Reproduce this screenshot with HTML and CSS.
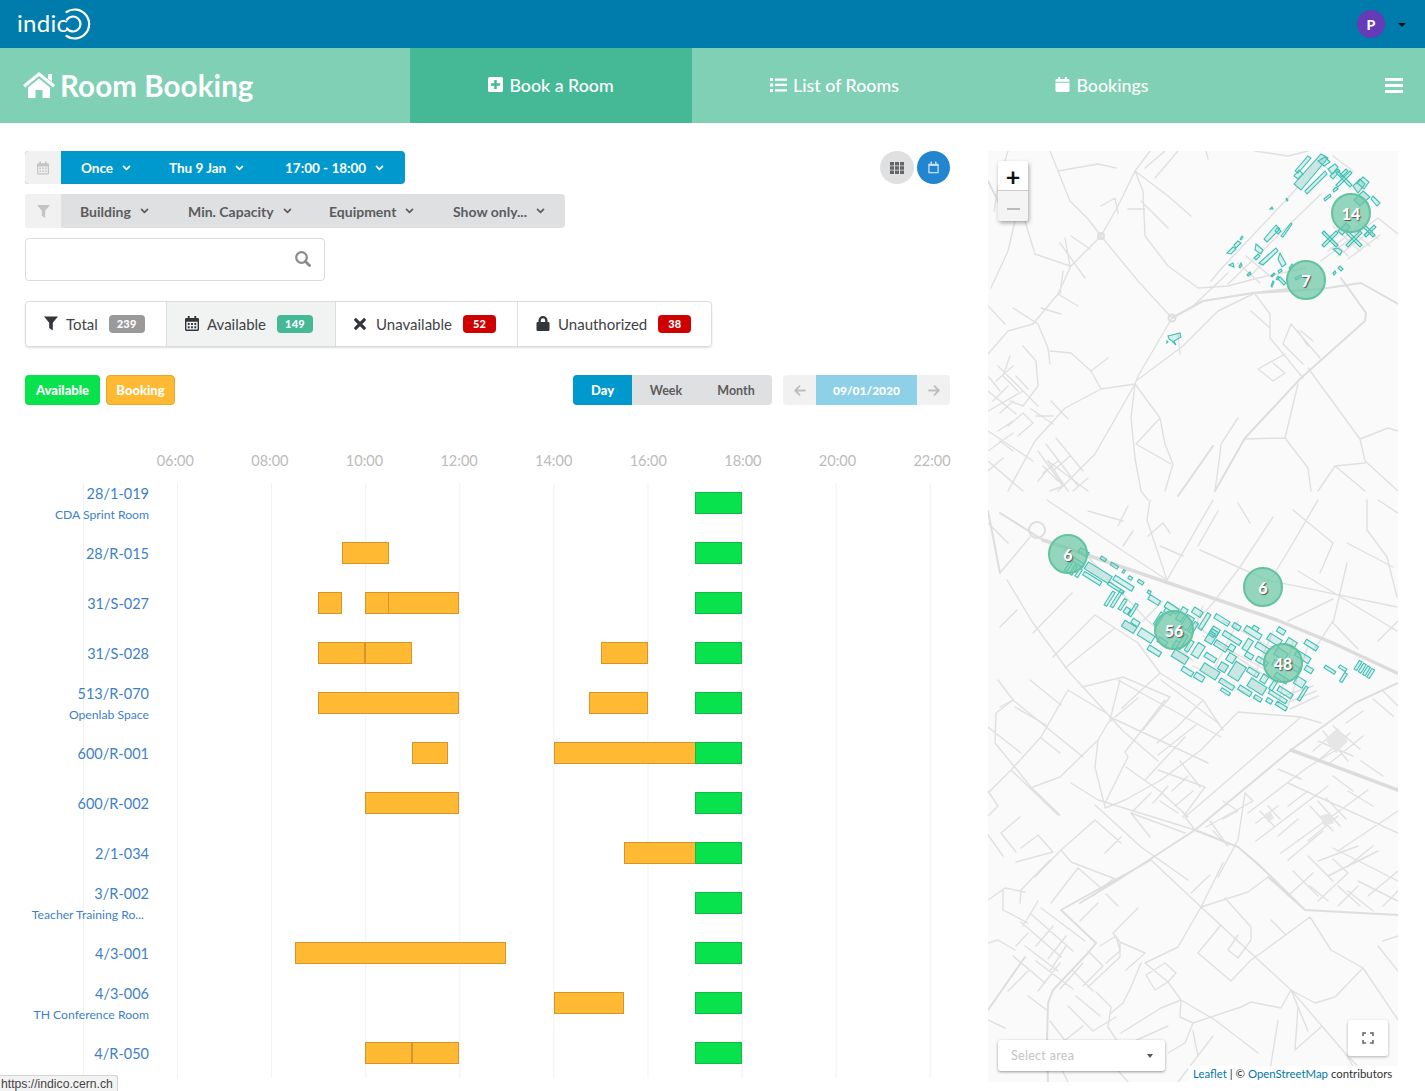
FILE: index.html
```html
<!DOCTYPE html>
<html lang="en">
<head>
    <meta charset="UTF-8">
    <meta name="viewport" content="width=device-width, initial-scale=1.0">
    <title>Room Booking</title>
    <link rel="stylesheet" href="styles.css">
</head>
<body>
    <svg class="icon-defs" aria-hidden="true">
        <symbol id="i-home" viewBox="0 0 32 26"><path d="M16 0 L32 13 L30 15.5 L16 4 L2 15.5 L0 13 Z M25 2h4v8l-4-3.5Z M16 6.5 L27 15.5 V25 a1 1 0 0 1-1 1 H19.500 V18 h-7 V26 H6 a1 1 0 0 1-1-1 V15.500 Z"/></symbol>
        <symbol id="i-plus" viewBox="0 0 16 16"><path fill-rule="evenodd" d="M2 0h12a2 2 0 0 1 2 2v12a2 2 0 0 1-2 2H2a2 2 0 0 1-2-2V2a2 2 0 0 1 2-2Zm4.700 3.200v3.500H3.200v2.600h3.500v3.500h2.600V9.300h3.500V6.700H9.300V3.200Z"/></symbol>
        <symbol id="i-list" viewBox="0 0 17 14"><path d="M0 0h3v3H0ZM5 .5h12v2.300H5ZM0 5.500h3v3H0ZM5 5.800h12v2.300H5ZM0 11h3v3H0ZM5 11.300h12v2.300H5Z"/></symbol>
        <symbol id="i-cal" viewBox="0 0 15 16"><path d="M3 0h2v2h5V0h2v2h1.500A1.500 1.500 0 0 1 15 3.500V5H0V3.500A1.500 1.500 0 0 1 1.500 2H3ZM0 6h15v8.500a1.500 1.500 0 0 1-1.500 1.500h-12A1.500 1.500 0 0 1 0 14.500Z"/></symbol>
        <symbol id="i-cal-grid" viewBox="0 0 15 16"><path fill-rule="evenodd" d="M3 0h2v2h5V0h2v2h1.500A1.500 1.500 0 0 1 15 3.500v11a1.500 1.500 0 0 1-1.500 1.500h-12A1.500 1.500 0 0 1 0 14.500v-11A1.500 1.500 0 0 1 1.500 2H3ZM1.500 6v8.500h12V6Zm1.500 1.500h2v2H3Zm3.500 0h2v2h-2Zm3.500 0h2v2h-2ZM3 11h2v2H3Zm3.500 0h2v2h-2Zm3.500 0h2v2h-2Z"/></symbol>
        <symbol id="i-filter" viewBox="0 0 14 14"><path d="M0 0h14L8.800 6.200V14L5.200 11.500V6.200Z"/></symbol>
        <symbol id="i-search" viewBox="0 0 16 16"><path fill="none" stroke="currentColor" stroke-width="2.200" d="M6.500 1.200a5.300 5.300 0 1 0 0 10.600a5.300 5.300 0 0 0 0-10.600Z"/><path fill="none" stroke="currentColor" stroke-width="2.800" stroke-linecap="round" d="M10.500 10.500 L14.500 14.500"/></symbol>
        <symbol id="i-times" viewBox="0 0 12 12"><path fill="none" stroke="currentColor" stroke-width="3.200" stroke-linecap="round" d="M1.800 1.800 L10.200 10.200 M10.200 1.800 L1.800 10.200"/></symbol>
        <symbol id="i-lock" viewBox="0 0 13 15"><path fill-rule="evenodd" d="M6.500 0A4.500 4.500 0 0 1 11 4.500V6h.8A1.200 1.200 0 0 1 13 7.200v6.600A1.200 1.200 0 0 1 11.800 15H1.200A1.200 1.200 0 0 1 0 13.800V7.200A1.200 1.200 0 0 1 1.200 6H2V4.500A4.500 4.500 0 0 1 6.500 0Zm0 2.300A2.200 2.200 0 0 0 4.300 4.500V6h4.400V4.500A2.200 2.200 0 0 0 6.500 2.300Z"/></symbol>
        <symbol id="i-grid" viewBox="0 0 14 12"><path d="M0 0h4v3.400H0ZM5 0h4v3.400H5ZM10 0h4v3.400h-4ZM0 4.300h4v3.400H0ZM5 4.300h4v3.400H5ZM10 4.300h4v3.400h-4ZM0 8.600h4V12H0ZM5 8.600h4V12H5ZM10 8.600h4V12h-4Z"/></symbol>
        <symbol id="i-cal-open" viewBox="0 0 12 13"><path fill="none" stroke="currentColor" stroke-width="1.400" d="M1 3h10v9H1Z"/><path fill="none" stroke="currentColor" stroke-width="1.600" d="M3.500 0v3M8.500 0v3M1 4h10"/></symbol>
        <symbol id="i-chev" viewBox="0 0 10 7"><path fill="none" stroke="currentColor" stroke-width="2" stroke-linecap="round" stroke-linejoin="round" d="M1.500 1.500 L5 5 L8.500 1.500"/></symbol>
        <symbol id="i-left" viewBox="0 0 12 11"><path fill="none" stroke="currentColor" stroke-width="1.800" stroke-linecap="round" stroke-linejoin="round" d="M11 5.500H1.500M5.500 1.200 L1.200 5.500 L5.500 9.800"/></symbol>
        <symbol id="i-right" viewBox="0 0 12 11"><path fill="none" stroke="currentColor" stroke-width="1.800" stroke-linecap="round" stroke-linejoin="round" d="M1 5.500h9.500M6.500 1.200 L10.800 5.500 L6.500 9.800"/></symbol>
    </svg>

    <header class="topbar">
        <a class="logo">
            <span class="logo-text">indic</span>
            <svg class="logo-mark" viewBox="0 0 36 32"><path d="M9.500 4 A14.500 14.500 0 1 1 9.500 28 M10 11.500 A7.500 7.500 0 1 1 10 20.500" fill="none" stroke="#fff" stroke-width="2.200" stroke-linecap="round"/></svg>
        </a>
        <div class="user">
            <span class="avatar">P</span>
            <span class="user-caret"></span>
        </div>
    </header>

    <nav class="navbar">
        <div class="brand">
            <svg class="brand-icon"><use href="#i-home"/></svg>
            <span>Room Booking</span>
        </div>
        <a class="tab tab-book active"><svg class="tab-icon"><use href="#i-plus"/></svg>Book a Room</a>
        <a class="tab tab-list"><svg class="tab-icon"><use href="#i-list"/></svg>List of Rooms</a>
        <a class="tab tab-bookings"><svg class="tab-icon"><use href="#i-cal"/></svg>Bookings</a>
        <div class="burger"><span></span><span></span><span></span></div>
    </nav>

    <main class="content">
        <section class="left">
            <div class="toolbar-top">
                <div class="filter-bar when">
                    <span class="filter-icon"><svg class="cal-mini"><use href="#i-cal-grid"/></svg></span>
                    <span class="filter-item once">Once <svg class="chev"><use href="#i-chev"/></svg></span>
                    <span class="filter-item date">Thu 9 Jan <svg class="chev"><use href="#i-chev"/></svg></span>
                    <span class="filter-item time">17:00 - 18:00 <svg class="chev"><use href="#i-chev"/></svg></span>
                </div>
                <div class="view-btns">
                    <span class="round-btn"><svg class="grid-icon"><use href="#i-grid"/></svg></span>
                    <span class="round-btn on"><svg class="open-icon"><use href="#i-cal-open"/></svg></span>
                </div>
            </div>

            <div class="filter-bar what">
                <span class="filter-icon"><svg class="filter-mini"><use href="#i-filter"/></svg></span>
                <span class="filter-item building">Building <svg class="chev"><use href="#i-chev"/></svg></span>
                <span class="filter-item capacity">Min. Capacity <svg class="chev"><use href="#i-chev"/></svg></span>
                <span class="filter-item equipment">Equipment <svg class="chev"><use href="#i-chev"/></svg></span>
                <span class="filter-item showonly">Show only... <svg class="chev"><use href="#i-chev"/></svg></span>
            </div>

            <div class="search-box"><svg class="search-icon"><use href="#i-search"/></svg></div>

            <div class="stats">
                <div class="stat stat-total"><svg class="stat-icon"><use href="#i-filter"/></svg>Total <span class="count grey">239</span></div>
                <div class="stat stat-avail current"><svg class="stat-icon"><use href="#i-cal-grid"/></svg>Available <span class="count green">149</span></div>
                <div class="stat stat-unavail"><svg class="stat-icon small"><use href="#i-times"/></svg>Unavailable <span class="count red">52</span></div>
                <div class="stat stat-unauth"><svg class="stat-icon"><use href="#i-lock"/></svg>Unauthorized <span class="count red">38</span></div>
            </div>

            <div class="controls">
                <div class="legend">
                    <span class="tag tag-free">Available</span>
                    <span class="tag tag-booked">Booking</span>
                </div>
                <div class="modes">
                    <span class="mode mode-day on">Day</span>
                    <span class="mode mode-week">Week</span>
                    <span class="mode mode-month">Month</span>
                </div>
                <div class="date-nav">
                    <span class="date-arrow"><svg class="arrow"><use href="#i-left"/></svg></span>
                    <span class="date-value">09/01/2020</span>
                    <span class="date-arrow"><svg class="arrow"><use href="#i-right"/></svg></span>
                </div>
            </div>

            <div class="hours">
                <span>06:00</span><span>08:00</span><span>10:00</span><span>12:00</span><span>14:00</span><span>16:00</span><span>18:00</span><span>20:00</span><span>22:00</span>
            </div>

            <div class="rows">
                <div class="row">
                    <a class="room"><span class="room-name">28/1-019</span><span class="room-sub">CDA Sprint Room</span></a>
                    <div class="track"><i class="bar free" style="left:518px;width:47px"></i></div>
                </div>
                <div class="row">
                    <a class="room"><span class="room-name">28/R-015</span></a>
                    <div class="track">
                        <i class="bar busy" style="left:165px;width:47px"></i>
                        <i class="bar free" style="left:518px;width:47px"></i>
                    </div>
                </div>
                <div class="row">
                    <a class="room"><span class="room-name">31/S-027</span></a>
                    <div class="track">
                        <i class="bar busy" style="left:141px;width:24px"></i>
                        <i class="bar busy" style="left:188px;width:24px"></i>
                        <i class="bar busy" style="left:211px;width:71px"></i>
                        <i class="bar free" style="left:518px;width:47px"></i>
                    </div>
                </div>
                <div class="row">
                    <a class="room"><span class="room-name">31/S-028</span></a>
                    <div class="track">
                        <i class="bar busy" style="left:141px;width:47px"></i>
                        <i class="bar busy" style="left:188px;width:47px"></i>
                        <i class="bar busy" style="left:424px;width:47px"></i>
                        <i class="bar free" style="left:518px;width:47px"></i>
                    </div>
                </div>
                <div class="row">
                    <a class="room"><span class="room-name">513/R-070</span><span class="room-sub">Openlab Space</span></a>
                    <div class="track">
                        <i class="bar busy" style="left:141px;width:141px"></i>
                        <i class="bar busy" style="left:412px;width:59px"></i>
                        <i class="bar free" style="left:518px;width:47px"></i>
                    </div>
                </div>
                <div class="row">
                    <a class="room"><span class="room-name">600/R-001</span></a>
                    <div class="track">
                        <i class="bar busy" style="left:235px;width:36px"></i>
                        <i class="bar busy" style="left:377px;width:142px"></i>
                        <i class="bar free" style="left:518px;width:47px"></i>
                    </div>
                </div>
                <div class="row">
                    <a class="room"><span class="room-name">600/R-002</span></a>
                    <div class="track">
                        <i class="bar busy" style="left:188px;width:94px"></i>
                        <i class="bar free" style="left:518px;width:47px"></i>
                    </div>
                </div>
                <div class="row">
                    <a class="room"><span class="room-name">2/1-034</span></a>
                    <div class="track">
                        <i class="bar busy" style="left:447px;width:72px"></i>
                        <i class="bar free" style="left:518px;width:47px"></i>
                    </div>
                </div>
                <div class="row">
                    <a class="room"><span class="room-name">3/R-002</span><span class="room-sub cut">Teacher Training Ro...</span></a>
                    <div class="track"><i class="bar free" style="left:518px;width:47px"></i></div>
                </div>
                <div class="row">
                    <a class="room"><span class="room-name">4/3-001</span></a>
                    <div class="track">
                        <i class="bar busy" style="left:118px;width:211px"></i>
                        <i class="bar free" style="left:518px;width:47px"></i>
                    </div>
                </div>
                <div class="row">
                    <a class="room"><span class="room-name">4/3-006</span><span class="room-sub">TH Conference Room</span></a>
                    <div class="track">
                        <i class="bar busy" style="left:377px;width:70px"></i>
                        <i class="bar free" style="left:518px;width:47px"></i>
                    </div>
                </div>
                <div class="row">
                    <a class="room"><span class="room-name">4/R-050</span></a>
                    <div class="track">
                        <i class="bar busy" style="left:188px;width:47px"></i>
                        <i class="bar busy" style="left:235px;width:47px"></i>
                        <i class="bar free" style="left:518px;width:47px"></i>
                    </div>
                </div>
            </div>
        </section>

        <section class="map">
            <svg class="map-bg" viewBox="0 0 410 931">
                <g class="roads thin">
                    <!-- north -->
                    <path d="M62 0 L70 20 L82 50 L100 68 L113 85 M70 20 L110 13 L128 17 M20 0 L12 25 L6 60 M113 85 L130 55 L147 20 L162 0 M147 20 L180 45 L203 65 M153 50 L180 77 M157 17 L177 0 M167 27 L190 0 M147 20 L155 40 L157 85 L180 115 L210 137 L240 135 L270 127 L317 117 M140 58 L157 58 M113 85 L150 130 L184 167 M37 70 L47 103 L82 115 M27 70 L20 100 L3 137 M83 85 L102 98 M72 92 L97 127 M77 87 L82 115 M113 55 L127 47 L130 62 M218 0 L220 8 M267 0 L300 5 L320 0"/>
                    <path d="M0 203 L20 180 L45 173 L70 143 L83 115 L113 85 M50 173 L60 197 L62 213 M62 200 L83 202 L103 220 L113 238 L147 233 M103 220 L120 207 M113 238 L77 257 L47 290 L20 340 M147 233 L107 303 L70 340 M147 233 L172 267 L148 293 L183 313 M172 267 L177 293 L185 313 L177 340 M147 233 L143 267 L147 307 L153 340 L160 349 M53 157 L73 163 M25 157 L50 173 M0 155 L17 173 M70 143 L90 155 M75 120 L72 143 M63 250 L80 268 M65 273 L43 258 M60 310 L100 340"/>
                    <path d="M184 167 L215 150 L265 142 M184 167 L150 225 L147 233 M148 230 L195 195 L230 160 L265 143 M223 130 L233 118 L300 47 L333 10 M240 133 L333 43 M333 110 L390 67 L410 83 M184 167 L205 155 L240 122 M190 183 L192 203 M257 288 L297 287 L320 317 L323 340 M297 287 L310 233 M320 217 L372 288 L377 310 L410 340 M372 288 L400 277 L410 280 M377 312 L347 315 L330 340 M347 315 L377 340 M232 303 L233 293 L250 267 M232 303 L227 340 M267 143 L282 163 L282 187 L315 227 M263 160 L282 177 M295 193 L303 173 L332 207 M295 193 L315 213 M270 218 L297 203 M270 218 L285 230 L297 222 L285 212 M310 180 L320 195 M325 190 L313 180"/>
                    <!-- left town, upper -->
                    <path d="M0 260 L35 240 M0 240 L28 263 M0 280 L45 310 M10 215 L50 255 M22 205 L15 225 L30 240 M35 195 L48 210 L50 235 L35 255 L22 250 M48 265 L65 265 M20 275 L35 262 L45 272 L30 285 M50 300 L75 335 L62 340 M58 293 L90 335 M68 287 L95 320 M80 340 L60 310 M70 310 L55 322 M82 305 L65 320 M0 300 L25 282 M0 320 L15 307 M35 340 L0 310 M100 327 L85 340 M8 230 L25 215 M5 250 L20 235 M0 225 L12 240 M12 262 L25 250 M28 225 L40 238 M12 290 L25 300 M25 270 L10 280 M55 315 L70 330 M50 330 L60 318"/>
                    <!-- middle band -->
                    <path d="M59 349 L120 390 L179 429 M179 429 L159 369 L162 349 M225 349 L179 429 M12 422 L42 386 M19 429 L45 472 L82 522 L95 536 L135 580 L170 610 M12 476 L29 459 M45 482 L84 442 M65 506 L107 464 M107 464 L150 492 L172 522 L215 549 L235 579 M77 517 L127 477 M94 536 L135 526 L182 546 M132 529 L122 569 M172 522 L134 557 M182 546 L155 579 M215 549 L189 576 L169 592 M12 556 L25 549 L95 606 M212 399 L279 429 L409 456 M285 366 L252 416 L225 452 L212 466 M305 359 L345 392 L332 422 M359 392 L405 416 M379 349 L379 379 L399 406 L409 446 M359 412 L345 472 M330 349 L305 392 L285 425 M0 372 L20 392 M390 349 L410 362 M230 360 L210 395 M250 352 L262 372 M100 360 L135 370 M145 380 L135 395 M310 420 L409 480 M345 472 L370 498 M390 490 L410 470 M300 470 L345 448 M160 385 L175 372 L182 382 M172 395 L195 405 M140 355 L130 375"/>
                    <!-- fields south of campus -->
                    <path d="M10 529 L25 549 L8 562 L7 592 L43 636 L72 664 M42 529 L73 554 M27 556 L58 574 M118 562 L80 539 L53 586 L23 619 L0 642 M53 587 L72 602 M130 529 L233 586 M173 529 L230 572 M150 547 L120 572 L110 589 L72 626 L45 636 M177 549 L137 601 L140 606 L117 652 M122 566 L220 612 M208 574 L170 604 M110 589 L107 616 L117 656 M138 616 L173 641 L200 666 M170 619 L217 636 L195 666 M157 629 L197 586 M163 642 L143 662 L162 686 M143 662 L197 682 M83 632 L110 649 L207 679 M107 654 L153 696 L200 729 M0 576 L33 602 M23 619 L70 664 M13 682 L32 666 M13 682 L28 701 M33 697 L50 684 L65 701 L28 711 M47 726 L73 699 L83 711 L130 729 M73 699 L107 669 L133 692 M117 702 L133 686 M0 640 L10 655 L0 665 M172 650 L190 662 M180 635 L165 652 M184 640 L200 625 M187 655 L205 640 M192 610 L212 636 M0 684 L15 705"/>
                    <path d="M313 566 L197 666 L207 679 M250 561 L213 599 L173 629 L137 649 L117 657 M250 561 L313 566 L333 572"/>
                    <!-- south east grid -->
                    <path d="M207 679 L250 696 L287 729 M257 642 L250 689 L230 726 M257 642 L265 650 L218 676 M260 662 L320 616 L353 596 M300 632 L410 682 M293 702 L380 639 M290 618 L313 628 M268 690 L340 635 M320 690 L350 665 M350 700 L410 660 M345 697 L410 730 M330 710 L370 695 M340 725 L390 700 M370 730 L410 750 M235 668 L250 660 L235 650 M225 680 L240 695 L222 670 M300 655 L320 640 M310 668 L290 685 M360 640 L385 655 M373 610 L395 625 M345 625 L365 640 M330 590 L365 605 M335 580 L360 610 M345 575 L372 598 M325 600 L350 578 M332 608 L362 582 M342 612 L375 585 M358 572 L375 560 M385 548 L405 565 M395 540 L410 555 M322 655 L345 680 M330 650 L352 675 M338 647 L358 668 M272 660 L286 675 M280 655 L292 668 M268 672 L290 655"/>
                    <!-- south -->
                    <path d="M163 709 L213 756 L303 839 L357 902 L375 931 M213 756 L260 741 L280 726 M213 756 L190 796 L157 812 M203 742 L222 724 M213 756 L235 712 M322 766 L343 799 L375 817 L410 869 M375 817 L347 846 L327 852 L303 839 M233 774 L210 802 L243 830 L263 809 L277 799 L322 766 M237 747 L263 776 L263 789 L250 807 L240 799 L250 784 M180 831 L193 849 L227 869 L270 902 M193 849 L173 857 L133 882 M193 849 L192 866 L205 872 L253 856 L263 851 L293 857 L303 839 L310 856 L307 899 M205 872 L197 892 L180 902 M157 812 L180 831 L167 839 L158 824 L177 812 L188 822 L180 831 M283 769 L297 783 M303 839 L320 880 M307 899 L333 876 M357 902 L385 931 M410 820 L390 795 M395 790 L410 785 M300 709 L335 680 M290 870 L280 931 M225 885 L190 931 M205 880 L210 905"/>
                    <!-- south west town -->
                    <path d="M0 749 L17 737 L37 741 M15 739 L15 759 L40 772 M0 792 L10 789 L27 799 M63 752 L90 717 M90 717 L113 737 M62 709 L33 739 L32 752 M0 869 L17 877 M33 771 L73 806 M43 763 L85 800 M53 757 L97 790 M65 775 L48 795 M78 785 L60 808 M50 750 L35 775 M40 782 L28 795 M37 795 L70 820 M48 810 L85 838 M25 805 L57 832 M62 820 L78 795 M50 840 L72 812 M72 838 L95 812 M40 845 L60 860 M85 820 L105 840 M88 845 L112 865 M80 855 L105 880 M62 870 L85 900 M70 895 L95 875 M100 800 L115 815 L95 835 M112 795 L128 785 L132 800 L118 812 M132 791 L125 782 L150 757 M132 791 L157 802 M108 841 L123 856 L120 876 L133 896 M132 792 L132 806 L100 836 M157 802 L138 819 M153 812 L143 836 L135 852 L123 862 M92 770 L110 752 M105 745 L125 728 M118 743 L130 755 M20 840 L40 820 M105 880 L128 866 M133 896 L180 875 M59 889 L80 931 M110 896 L140 931"/>
                    <path d="M300 745 L325 722 M320 705 L345 730 M345 708 L360 722 L330 750 M360 715 L385 695 M370 735 L350 755 M380 745 L410 720 M385 760 L360 740 M395 755 L410 740 M305 720 L330 745 M322 735 L340 750 M350 735 L372 755"/>
                    <!-- roads inside the campus -->
                    <path d="M100 406 L160 470 L205 510 M180 450 L240 500 L300 540 M215 455 L195 510 M250 470 L225 520 M285 480 L260 540 M305 490 L290 555 M320 495 L300 555 M235 470 L290 500 M215 485 L280 520 M205 515 L270 548 M295 545 L325 535 M298 552 L328 540 M302 558 L330 545 M155 470 L175 450 M345 470 L325 500"/>
                    <!-- around the north site -->
                    <path d="M335 80 L360 105 M345 75 L372 100 M355 72 L382 95 M365 68 L390 88 M340 100 L375 72 M350 105 L385 78 M360 108 L392 84 M337 15 L350 28 M345 5 L365 20 M250 112 L272 132 M258 105 L282 125 M262 125 L275 112"/>
                </g>
                <g class="roads mid">
                    <path d="M227 340 L257 287 L313 227 L377 170 L378 162 L353 127 M12 362 L55 389 M163 709 L73 759 L108 792 L100 802 L65 839 L60 852 L59 889 L60 931 M37 806 L0 859 M280 726 L317 759 L410 764 M207 679 L250 696 L270 713 L317 759 M270 142 L333 138 L373 132 L410 153 M184 167 L215 150 L265 142 L300 138 M0 30 L15 60 M0 360 L12 422 M190 345 L225 295 M410 532 L367 552 L303 599 L207 679 L130 729 L92 752"/>
                    <circle cx="49" cy="379" r="8" fill="none"/>
                    <circle cx="184" cy="167" r="3.500" fill="none"/>
                    <circle cx="113" cy="85" r="3" fill="none"/>
                </g>
                <g class="roads thick">
                    <path d="M55 389 L172 429 L289 469 L345 492 L409 522 M303 599 L410 639"/>
                </g>
                <path class="block" d="M338 590 L350 578 L360 590 L348 602 Z M332 665 L342 662 L346 672 L336 675 Z M276 664 L282 660 L286 667 L280 671 Z"/>

                <!-- buildings north -->
                <g class="buildings">
                    <path class="solid" d="M306 33 L333 3 L340 7 L313 39 Z M365 35 L372 28 L377 33 L370 42 Z M375 40 L382 46 L372 55 L366 49 Z M350 80 L358 72 L362 76 L354 84 Z"/>
                    <path d="M307 20 L320 5 L323 7 L310 22 Z M311 19 L306 25 L310 28 L315 23 Z M317 40 L337 20 L339 23 L319 43 Z M340 18 L347 13 L350 16 L344 23 Z M352 24 L358 18 L360 20 L354 26 Z M336 48 L342 43 L343 45 L337 50 Z M345 39 L348 36 L350 38 L346 41 Z M276 88 L288 74 L292 78 L279 91 Z M289 77 L293 80 L290 83 L287 80 Z M293 85 L303 72 L304 73 L295 86 Z M239 102 L245 96 L248 98 L243 103 Z M246 94 L250 90 L253 92 L248 97 Z M252 88 L254 85 L255 86 L253 89 Z M268 93 L275 99 L273 103 L267 99 Z M271 112 L288 97 L290 100 L275 114 Z M266 107 L270 103 L272 105 L268 109 Z M241 114 L245 112 L246 116 Z M290 108 L292 102 L298 113 L294 116 Z M369 32 L375 26 L381 31 L376 38 Z M385 45 L392 52 L389 55 L383 48 Z M330 10 L337 6 L342 11 L336 15 Z M342 25 L350 18 L352 20 L345 28 Z M345 122 L347 120 L348 122 L346 124 Z M283 125 L286 122 L287 123 L284 126 Z M288 128 L290 125 L291 126 L289 129 Z M290 120 L293 118 L294 120 L291 122 Z M259 124 L262 121 L263 123 L260 125 Z M251 116 L253 112 L254 114 L252 117 Z M301 117 L304 113 L305 115 L302 118 Z M307 127 L313 124 L314 126 L308 129 Z M283 135 L285 130 L286 131 L284 136 Z M298 47 L300 49 L299 50 Z M282 58 L284 56 L285 58 Z M180 185 L192 182 L193 186 L186 190 L188 194 L184 190 L181 188 Z M179 190 L180 191 L179 192 Z M292 126 L298 132 L296 134 L290 128 Z M352 115 L355 118 L353 120 L350 117 Z"/>
                    <path d="M348 34 L362 20 L364 22 L350 36 Z M350 20 L364 34 L362 36 L348 22 Z M334 94 L348 80 L350 82 L336 96 Z M336 80 L350 94 L348 96 L334 82 Z M358 94 L372 80 L374 82 L360 96 Z M360 80 L374 94 L372 96 L358 82 Z M376 84 L386 74 L388 76 L378 86 Z M377 74 L387 84 L385 86 L375 76 Z M345 98 L352 104 L354 100 L350 97 Z"/>
                </g>
                <!-- buildings campus, along the axis of the site -->
                <g class="buildings" transform="translate(75 395) rotate(32)">
                    <path class="solid" d="M30 0h28v8H30Z M182 24h18v9h-18Z M208 6h12v16h-12Z M230 12h18v9h-18Z M170 5h8v-14h-8Z M196 14h8v8h-8Z M92 30h14v7H92Z M150 28h16v8h-16Z"/>
                    <path d="M16 -8h10v5H16Z M38 -12h6v3h-6Z M50 -12h8v3h-8Z M64 -12h2v3h-2Z M72 -10h4v3h-4Z M82 -12h6v3h-6Z M96 -8h3v3h-3Z M14 4h14v4H14Z M14 10h3v10h-3Z M20 10h3v10h-3Z M26 10h3v9h-3Z M32 10h20v4H32Z M60 -3h22v5H60Z M58 6h18v3H58Z M72 6h3v20h-3Z M66 12h3v16h-3Z M80 12h3v12h-3Z M86 18h5v6h-5Z M92 10h3v14h-3Z M100 -5h12v5h-12Z M118 -8h14v6h-14Z M118 4h4v14h-4Z M110 28h16v8h-16Z M130 26h10v5h-10Z M126 38h14v5h-14Z M98 24h8v5h-8Z M134 -12h6v14h-6Z M144 -18h10v6h-10Z M142 -8h8v14h-8Z M152 -6h4v12h-4Z M158 -20h4v18h-4Z M166 -24h16v5h-16Z M186 -26h8v5h-8Z M198 -30h18v6h-18Z M222 -36h14v7h-14Z M240 -42h10v7h-10Z M256 -50h14v5h-14Z M170 -12h8v8h-8Z M182 -14h20v5h-20Z M206 -20h6v12h-6Z M216 -22h14v6h-14Z M236 -28h12v8h-12Z M254 -36h16v6h-16Z M150 10h4v16h-4Z M158 12h4v12h-4Z M166 10h8v14h-8Z M178 14h12v5h-12Z M180 -2h14v6h-14Z M198 2h8v8h-8Z M146 20h4v8h-4Z M194 -6h6v6h-6Z M222 4h12v5h-12Z M238 2h6v8h-6Z M248 -6h14v5h-14Z M268 -14h10v8h-10Z M250 2h4v10h-4Z M258 4h16v5h-16Z M252 12h20v4h-20Z M254 20h6v4h-6Z M264 18h12v4h-12Z M280 -10h3v16h-3Z M286 -38h12v3h-12Z M298 -46h8v3h-8Z M306 -42h3v10h-3Z M312 -60h3v10h-3Z M317 -60h3v10h-3Z M322 -60h3v10h-3Z M327 -60h3v10h-3Z M166 38h12v5h-12Z M180 36h10v6h-10Z M204 28h16v5h-16Z M224 24h14v5h-14Z M242 24h8v4h-8Z M170 -6h6v4h-6Z M212 -8h8v5h-8Z M224 -10h12v5h-12Z M240 -16h8v6h-8Z M254 -22h12v5h-12Z M270 -28h8v5h-8Z M204 -34h6v4h-6Z M226 -46h8v5h-8Z M210 36h10v3h-10Z M120 -2h8v4h-8Z"/>
                </g>
            </svg>

            <span class="cluster c14">14</span>
            <span class="cluster c7">7</span>
            <span class="cluster c6a">6</span>
            <span class="cluster c6b">6</span>
            <span class="cluster c56">56</span>
            <span class="cluster c48">48</span>

            <div class="zoom-ctl">
                <span class="zoom-in">+</span>
                <span class="zoom-out"></span>
            </div>

            <div class="fullscreen">
                <svg class="fs-icon" viewBox="0 0 12 12"><path fill="none" stroke="currentColor" stroke-width="1.600" d="M1 4V1h3M8 1h3v3M11 8v3H8M4 11H1V8"/></svg>
            </div>

            <div class="area-select">
                <span>Select area</span>
                <span class="area-caret"></span>
            </div>

            <div class="attribution"><a>Leaflet</a> | © <a>OpenStreetMap</a> contributors</div>
        </section>
    </main>

    <div class="status-tip">https://indico.cern.ch</div>
</body>
</html>
```

FILE: styles.css
```css
* {
    box-sizing: border-box;
}

html, body {
    height: 100%;
}

body {
    margin: 0;
    height: 1091px;
    overflow: hidden;
    position: relative;
    background: #fff;
    color: #333;
    font-family: Lato, "Open Sans", sans-serif;
}

.icon-defs {
    width: 0;
    height: 0;
    position: absolute;
}

svg {
    fill: currentColor;
}

/* top bars */
.topbar {
    height: 48px;
    background: #007cac;
    display: flex;
    justify-content: space-between;
    align-items: center;
    padding: 0 19px 0 17px;
}

.logo {
    display: flex;
    align-items: center;
    color: #fff;
}

.logo-text {
    font-size: 24px;
    font-weight: 400;
    line-height: 30px;
    letter-spacing: 0.3px;
    margin-top: -3px;
}

.logo-mark {
    width: 36px;
    height: 32px;
    margin-left: -11px;
    margin-top: -1px;
}

.user {
    display: flex;
    align-items: center;
    gap: 13px;
}

.avatar {
    width: 28px;
    height: 28px;
    border-radius: 50%;
    background: #673ab7;
    color: #fff;
    font-size: 14px;
    font-weight: 900;
    display: flex;
    align-items: center;
    justify-content: center;
}

.user-caret {
    border: 4px solid transparent;
    border-top: 4px solid #111;
    border-bottom: 0;
    margin-top: 2px;
}

.navbar {
    height: 75px;
    background: #7fd0b4;
    display: flex;
    align-items: center;
    color: #fff;
}

.brand {
    width: 410px;
    padding-left: 23px;
    display: flex;
    align-items: center;
    gap: 5px;
    font-size: 29.500px;
    font-weight: 700;
    letter-spacing: 0.1px;
}

.brand-icon {
    width: 32px;
    height: 26px;
    margin-top: -2px;
}

.tab {
    height: 75px;
    display: flex;
    align-items: center;
    justify-content: center;
    gap: 6px;
    font-size: 17.800px;
    font-weight: 500;
    padding-bottom: 2px;
}

.tab-book {
    width: 282px;
}

.tab-list {
    width: 285px;
}

.tab-bookings {
    width: 250px;
}

.tab.active {
    background: #45b995;
}

.tab-icon {
    width: 15px;
    height: 15px;
}

.tab-list .tab-icon {
    width: 17px;
    height: 14px;
}

.burger {
    margin-left: auto;
    margin-right: 22px;
    width: 18px;
    display: flex;
    flex-direction: column;
    gap: 3px;
}

.burger span {
    height: 3px;
    background: #fff;
}

/* layout */
.content {
    display: flex;
    gap: 38px;
    padding: 28px 0 0 25px;
}

.left {
    width: 925px;
    flex-shrink: 0;
}

/* filter bars */
.toolbar-top {
    display: flex;
    justify-content: space-between;
    align-items: flex-start;
}

.filter-bar {
    display: flex;
    align-items: center;
    font-size: 14px;
    font-weight: 700;
    border-radius: 4px;
    overflow: hidden;
}

.filter-icon {
    width: 36px;
    align-self: stretch;
    background: #f1f1f2;
    color: #c4c4c4;
    display: flex;
    align-items: center;
    justify-content: center;
}

.cal-mini {
    width: 12px;
    height: 14px;
}

.filter-mini {
    width: 13px;
    height: 13px;
}

.filter-item {
    height: 100%;
    display: flex;
    align-items: center;
    gap: 9px;
    white-space: nowrap;
}

.when {
    height: 33px;
    width: 380px;
    background: #0099ce;
    color: #fff;
    font-size: 13.500px;
}

.once {
    width: 88px;
    padding-left: 20px;
}

.date {
    width: 117px;
    padding-left: 20px;
}

.time {
    padding-left: 19px;
}

.chev {
    width: 9px;
    height: 6px;
}

.what {
    height: 34px;
    width: 540px;
    margin-top: 10px;
    background: #dfe0e2;
    color: #5c5c5c;
}

.building {
    width: 108px;
    padding-left: 19px;
}

.capacity {
    width: 141px;
    padding-left: 19px;
}

.equipment {
    width: 124px;
    padding-left: 19px;
}

.showonly {
    padding-left: 19px;
}

.view-btns {
    display: flex;
    gap: 3px;
}

.round-btn {
    width: 34px;
    height: 33px;
    border-radius: 50%;
    background: #dfe0e2;
    color: #666;
    display: flex;
    align-items: center;
    justify-content: center;
}

.round-btn.on {
    width: 33px;
    background: #2185d0;
    color: #c8e0f4;
}

.grid-icon {
    width: 14px;
    height: 12px;
}

.open-icon {
    width: 11px;
    height: 13px;
}

.search-box {
    width: 300px;
    height: 43px;
    margin-top: 10px;
    border: 1px solid #dcdcdc;
    border-radius: 4px;
    display: flex;
    align-items: center;
    justify-content: flex-end;
    padding: 0 13px 2px 0;
    color: #8a8a8a;
}

.search-icon {
    width: 16px;
    height: 16px;
}

/* stats */
.stats {
    display: flex;
    width: 687px;
    height: 46px;
    margin-top: 20px;
    border: 1px solid #dcdcdc;
    border-radius: 4px;
    box-shadow: 0 1px 2px rgba(34, 36, 38, 0.15);
    font-size: 15px;
    color: #3f4347;
}

.stat {
    display: flex;
    align-items: center;
    padding: 0 0 1px 18px;
    border-right: 1px solid #dedede;
}

.stat-total {
    width: 141px;
}

.stat-avail {
    width: 169px;
}

.stat-unavail {
    width: 182px;
}

.stat-unauth {
    flex: 1;
    border-right: 0;
}

.stat.current {
    background: #f1f2f2;
}

.stat-icon {
    width: 14px;
    height: 15px;
    margin-right: 8px;
    color: #33373b;
}

.stat-icon.small {
    width: 12px;
    height: 12px;
    margin-right: 10px;
}

.count {
    margin-left: 11px;
    height: 18px;
    padding: 0 8px;
    border-radius: 4px;
    color: #fff;
    font-size: 11px;
    font-weight: 900;
    line-height: 18px;
    letter-spacing: 0.2px;
}

.count.grey {
    background: #9a9a9a;
}

.count.green {
    background: #45b995;
}

.count.red {
    background: #cf0000;
    padding: 0 10px;
}

/* legend and date controls */
.controls {
    display: flex;
    align-items: flex-start;
    height: 30px;
    margin-top: 28px;
}

.legend {
    display: flex;
    gap: 6px;
    width: 548px;
}

.tag {
    height: 30px;
    border-radius: 4px;
    color: #fff;
    font-size: 13px;
    font-weight: 900;
    display: flex;
    align-items: center;
    justify-content: center;
}

.tag-free {
    width: 75px;
    background: #08e34d;
}

.tag-booked {
    width: 69px;
    background: #ffb932;
    border: 1px solid #eaa52b;
}

.modes {
    display: flex;
    width: 199px;
    height: 30px;
    background: #dfe0e2;
    border-radius: 4px;
    overflow: hidden;
    color: #5c5c5c;
    font-size: 12.500px;
    font-weight: 700;
}

.mode {
    display: flex;
    align-items: center;
    justify-content: center;
}

.mode-day {
    width: 59px;
}

.mode-week {
    width: 68px;
}

.mode-month {
    width: 72px;
}

.mode.on {
    background: #0099ce;
    color: #fff;
    font-size: 13px;
    font-weight: 900;
}

.date-nav {
    display: flex;
    margin-left: 11px;
    width: 167px;
    height: 30px;
    background: #f1f1f2;
    border-radius: 4px;
    overflow: hidden;
    color: #bdbdbd;
}

.date-arrow {
    width: 33px;
    display: flex;
    align-items: center;
    justify-content: center;
}

.arrow {
    width: 12px;
    height: 11px;
}

.date-value {
    width: 101px;
    background: #8dd0e8;
    color: #fff;
    font-size: 12px;
    font-weight: 900;
    display: flex;
    align-items: center;
    justify-content: center;
}

/* timeline */
.hours {
    display: flex;
    margin: 46px 0 0 103px;
    height: 20px;
    color: #bbb;
    font-size: 14.500px;
    line-height: 20px;
}

.hours span {
    width: 94.600px;
    flex-shrink: 0;
    text-align: center;
}

.rows {
    margin-top: 7px;
    background-image: linear-gradient(to right, #f1f1f1 1px, transparent 1px);
    background-size: 94.100px 100%;
    background-position: 152px 5px;
    background-repeat: repeat-x;
    width: 925px;
}

.row {
    display: flex;
    height: 50px;
    align-items: center;
}

.room {
    width: 124px;
    flex-shrink: 0;
    margin-right: 28px;
    padding-top: 2px;
    text-align: right;
    color: #3e7fc6;
    display: flex;
    flex-direction: column;
    gap: 3px;
}

.room-name {
    font-size: 14.500px;
    line-height: 18px;
}

.room-sub {
    font-size: 12.200px;
    line-height: 18px;
    white-space: nowrap;
}

.room-sub.cut {
    padding-right: 5px;
}

.track {
    position: relative;
    flex: 1;
    height: 22px;
}

.bar {
    position: absolute;
    top: 0;
    height: 22px;
    border: 1px solid;
}

.bar.free {
    background: #08e34d;
    border-color: #14b84a;
}

.bar.busy {
    background: #ffb932;
    border-color: #d6952b;
}

/* map */
.map {
    position: relative;
    width: 410px;
    height: 931px;
    background: #fafafa;
    overflow: hidden;
}

.map-bg {
    display: block;
    width: 410px;
    height: 931px;
    fill: none;
}

.roads {
    fill: none;
    stroke: #e0e0e0;
    stroke-linejoin: round;
    stroke-linecap: round;
}

.roads.thin {
    stroke-width: 1.400;
}

.roads.mid {
    stroke-width: 2;
    stroke: #dedede;
}

.roads.thick {
    stroke-width: 3.500;
    stroke: #dcdcdc;
}

.block {
    fill: #e6e6e6;
}

.buildings {
    fill: rgba(69, 194, 184, 0.2);
    stroke: #3fc0b5;
    stroke-width: 1.100;
}

.buildings .solid {
    fill: #c9e6e3;
}

.cluster {
    position: absolute;
    width: 40px;
    height: 40px;
    border-radius: 50%;
    background: rgba(108, 198, 165, 0.72);
    border: 2px solid #61c39f;
    color: #fff;
    font-size: 16px;
    font-weight: 900;
    text-shadow: 1px 1px 1px #555;
    display: flex;
    align-items: center;
    justify-content: center;
}

.c14 { left: 343px; top: 42px; }
.c7 { left: 298px; top: 109px; }
.c6a { left: 60px; top: 383px; }
.c6b { left: 255px; top: 416px; }
.c56 { left: 166px; top: 459px; }
.c48 { left: 275px; top: 492px; }

.zoom-ctl {
    position: absolute;
    left: 10px;
    top: 10px;
    width: 30px;
    height: 60px;
    border-radius: 3px;
    box-shadow: 1px 2px 4px rgba(0, 0, 0, 0.35);
    overflow: hidden;
}

.zoom-in {
    display: flex;
    align-items: center;
    justify-content: center;
    height: 30px;
    background: #fff;
    color: #111;
    font-size: 25px;
    font-weight: 700;
    border-bottom: 1px solid #ccc;
}

.zoom-out {
    display: block;
    height: 30px;
    background: #f4f4f4;
    position: relative;
}

.zoom-out::before {
    content: "";
    position: absolute;
    left: 9px;
    top: 17px;
    width: 13px;
    height: 2px;
    background: #bbb;
}

.fullscreen {
    position: absolute;
    left: 360px;
    top: 869px;
    width: 40px;
    height: 36px;
    background: #fff;
    border-radius: 2px;
    box-shadow: 0 1px 3px rgba(0, 0, 0, 0.3);
    color: #666;
    display: flex;
    align-items: center;
    justify-content: center;
}

.fs-icon {
    width: 12px;
    height: 12px;
}

.area-select {
    position: absolute;
    left: 10px;
    top: 889px;
    width: 167px;
    height: 31px;
    background: #fff;
    border-radius: 3px;
    box-shadow: 0 1px 3px rgba(0, 0, 0, 0.4);
    display: flex;
    align-items: center;
    justify-content: space-between;
    padding: 0 12px 0 13px;
    color: #c4c4c4;
    font-size: 12.500px;
    letter-spacing: 0.3px;
}

.area-caret {
    border: 3.500px solid transparent;
    border-top: 4px solid #555;
    border-bottom: 0;
}

.attribution {
    position: absolute;
    right: 0;
    bottom: 0;
    width: 210px;
    height: 16px;
    padding-left: 5px;
    background: rgba(255, 255, 255, 0.85);
    color: #333;
    font-size: 11.400px;
    line-height: 16px;
    white-space: nowrap;
}

.attribution a {
    color: #0078a8;
}

.status-tip {
    position: absolute;
    left: 0;
    bottom: 0;
    width: 118px;
    height: 16px;
    padding-left: 1px;
    background: #f3f3f3;
    border: 1px solid #d4d4d4;
    border-width: 1px 1px 0 0;
    border-top-right-radius: 3px;
    color: #444;
    font-family: "Liberation Sans", sans-serif;
    font-size: 12.200px;
    line-height: 16px;
    white-space: nowrap;
}
```
